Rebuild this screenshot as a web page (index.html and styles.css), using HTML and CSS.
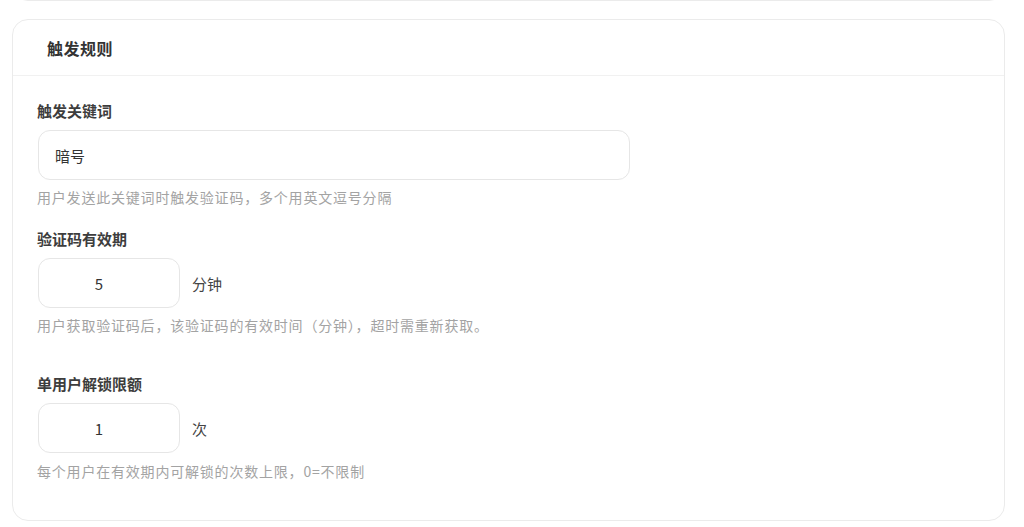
FILE: index.html
```html
<!DOCTYPE html>
<html lang="zh-CN">
<head>
    <meta charset="UTF-8">
    <meta name="viewport" content="width=device-width, initial-scale=1.0">
    <title>触发规则</title>
    <link rel="stylesheet" href="styles.css">
</head>
<body>
    <div class="card card-prev"></div>

    <div class="card">
        <div class="card-header">
            <h2>触发规则</h2>
        </div>
        <div class="card-body">
            <div class="form-group">
                <label for="keyword">触发关键词</label>
                <input type="text" id="keyword" class="input input-wide" value="暗号">
                <p class="help">用户发送此关键词时触发验证码，多个用英文逗号分隔</p>
            </div>

            <div class="form-group form-group-spaced">
                <label for="expire">验证码有效期</label>
                <div class="input-row">
                    <input type="text" id="expire" class="input input-num" value="5">
                    <span class="unit">分钟</span>
                </div>
                <p class="help">用户获取验证码后，该验证码的有效时间（分钟），超时需重新获取。</p>
            </div>

            <div class="form-group">
                <label for="limit">单用户解锁限额</label>
                <div class="input-row">
                    <input type="text" id="limit" class="input input-num" value="1">
                    <span class="unit">次</span>
                </div>
                <p class="help help-last">每个用户在有效期内可解锁的次数上限，0=不限制</p>
            </div>
        </div>
    </div>
</body>
</html>
```

FILE: styles.css
```css
body {
    font-family: "Noto Sans CJK SC", "Noto Sans", sans-serif;
    background-color: #fff;
    color: #333;
    margin: 0;
    padding: 0 19px 0 12px;
    overflow: hidden;
}
.card {
    background-color: #fff;
    border: 1px solid #ebebeb;
    border-radius: 16px;
}
/* bottom edge of the section above, scrolled mostly out of view */
.card-prev {
    height: 40px;
    margin-top: -41px;
    margin-bottom: 18px;
}
.card-header {
    height: 55px;
    display: flex;
    align-items: center;
    padding-left: 34px;
    border-bottom: 1px solid #f1f1f1;
}
.card-header h2 {
    margin: 0;
    font-size: 16px;
    font-weight: bold;
    letter-spacing: 0.5px;
    color: #333;
}
.card-body {
    padding: 24px 24px 39px;
}
.form-group {
    margin-bottom: 21px;
}
.form-group:last-child {
    margin-bottom: 0;
}
.form-group-spaced {
    margin-bottom: 38px;
}
label {
    display: block;
    font-size: 15px;
    line-height: 22px;
    font-weight: bold;
    color: #3d3d3d;
    margin-bottom: 8px;
}
.input {
    font-family: inherit;
    font-size: 15px;
    color: #333;
    height: 50px;
    border: 1px solid #e6e6e6;
    border-radius: 12px;
    box-sizing: border-box;
    outline: none;
    background: #fff;
}
.input-wide {
    width: 592px;
    padding: 0 16px;
    margin-left: 1px;
}
.input-row {
    display: flex;
    align-items: center;
    gap: 12px;
    margin-left: 1px;
}
.input-num {
    width: 142px;
    padding: 0 32px 0 12px;
    text-align: center;
}
.unit {
    font-size: 15px;
    color: #444;
}
.help {
    margin: 7px 0 0;
    font-size: 14px;
    line-height: 20px;
    letter-spacing: 0.8px;
    color: #a3a3a3;
}
.help-last {
    margin-top: 8px;
}
```
